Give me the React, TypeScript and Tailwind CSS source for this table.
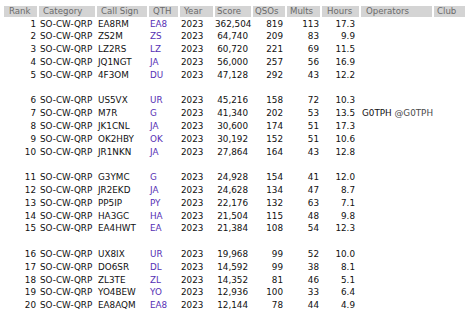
const cols = 'grid grid-cols-[33px_56px_50px_29px_33px_36px_32px_33px_37px_71px_31px] gap-x-[2px]';

type Row = {
  rank: number;
  call: string;
  qth: string;
  score: string;
  qsos: number;
  mults: number;
  hours: string;
  ops?: [string, string];
};

const groups: Row[][] = [
  [
    { rank: 1, call: 'EA8RM', qth: 'EA8', score: '362,504', qsos: 819, mults: 113, hours: '17.3' },
    { rank: 2, call: 'ZS2M', qth: 'ZS', score: '64,740', qsos: 209, mults: 83, hours: '9.9' },
    { rank: 3, call: 'LZ2RS', qth: 'LZ', score: '60,720', qsos: 221, mults: 69, hours: '11.5' },
    { rank: 4, call: 'JQ1NGT', qth: 'JA', score: '56,000', qsos: 257, mults: 56, hours: '16.9' },
    { rank: 5, call: '4F3OM', qth: 'DU', score: '47,128', qsos: 292, mults: 43, hours: '12.2' },
  ],
  [
    { rank: 6, call: 'US5VX', qth: 'UR', score: '45,216', qsos: 158, mults: 72, hours: '10.3' },
    { rank: 7, call: 'M7R', qth: 'G', score: '41,340', qsos: 202, mults: 53, hours: '13.5', ops: ['G0TPH', '@G0TPH'] },
    { rank: 8, call: 'JK1CNL', qth: 'JA', score: '30,600', qsos: 174, mults: 51, hours: '17.3' },
    { rank: 9, call: 'OK2HBY', qth: 'OK', score: '30,192', qsos: 152, mults: 51, hours: '10.6' },
    { rank: 10, call: 'JR1NKN', qth: 'JA', score: '27,864', qsos: 164, mults: 43, hours: '12.8' },
  ],
  [
    { rank: 11, call: 'G3YMC', qth: 'G', score: '24,928', qsos: 154, mults: 41, hours: '12.0' },
    { rank: 12, call: 'JR2EKD', qth: 'JA', score: '24,628', qsos: 134, mults: 47, hours: '8.7' },
    { rank: 13, call: 'PP5IP', qth: 'PY', score: '22,176', qsos: 132, mults: 63, hours: '7.1' },
    { rank: 14, call: 'HA3GC', qth: 'HA', score: '21,504', qsos: 115, mults: 48, hours: '9.8' },
    { rank: 15, call: 'EA4HWT', qth: 'EA', score: '21,384', qsos: 108, mults: 54, hours: '12.3' },
  ],
  [
    { rank: 16, call: 'UX8IX', qth: 'UR', score: '19,968', qsos: 99, mults: 52, hours: '10.0' },
    { rank: 17, call: 'DO6SR', qth: 'DL', score: '14,592', qsos: 99, mults: 38, hours: '8.1' },
    { rank: 18, call: 'ZL3TE', qth: 'ZL', score: '14,352', qsos: 81, mults: 46, hours: '5.1' },
    { rank: 19, call: 'YO4BEW', qth: 'YO', score: '12,936', qsos: 100, mults: 33, hours: '6.4' },
    { rank: 20, call: 'EA8AQM', qth: 'EA8', score: '12,144', qsos: 78, mults: 44, hours: '4.9' },
  ],
];

const headers: [string, string][] = [
  ['Rank', 'pl-[5px]'],
  ['Category', 'pl-[4px]'],
  ['Call Sign', 'pl-[4px]'],
  ['QTH', 'pl-[4px]'],
  ['Year', 'pl-[4px]'],
  ['Score', 'pl-[2px]'],
  ['QSOs', 'pl-[2px]'],
  ['Mults', 'pl-[3px]'],
  ['Hours', 'pl-[5px]'],
  ['Operators', 'pl-[5px]'],
  ['Club', 'pl-[3px]'],
];

function ResultRow({ r }: { r: Row }) {
  return (
    <div className={`${cols} h-[12.8px] leading-[12.8px] text-[#111]`}>
      <div className="text-right pr-[1px]">{r.rank}</div>
      <div className="pl-[1px] whitespace-nowrap">SO-CW-QRP</div>
      <div className="pl-[1px]">{r.call}</div>
      <div className="pl-[1px] text-[#5630b4]">{r.qth}</div>
      <div className="pl-[1px]">2023</div>
      <div className="text-right pr-[3px]">{r.score}</div>
      <div className="text-right pr-[2px]">{r.qsos}</div>
      <div className="text-right pr-[1px]">{r.mults}</div>
      <div className="text-right pr-[4px]">{r.hours}</div>
      <div className="pl-[1px] whitespace-nowrap">
        {r.ops && (
          <>
            {r.ops[0]} <span className="text-[#4a4a4a]">{r.ops[1]}</span>
          </>
        )}
      </div>
      <div />
    </div>
  );
}

export default function App() {
  return (
    <div className="w-[474px] h-[313px] bg-white overflow-hidden pl-[4px] pt-[6px] font-['DejaVu_Sans',sans-serif] text-[8.8px]">
      <div className={`${cols} h-[11px] leading-[11px] mb-[0.6px] text-[8.6px]`}>
        {headers.map(([h, pad]) => (
          <div key={h} className={`bg-[#d4d4d4] text-[#6b6b6b] whitespace-nowrap ${pad}`}>
            {h}
          </div>
        ))}
      </div>
      {groups.map((g, i) => (
        <div key={i}>
          {i > 0 && <div className="h-[12.8px]" />}
          {g.map((r) => (
            <ResultRow key={r.rank} r={r} />
          ))}
        </div>
      ))}
    </div>
  );
}
